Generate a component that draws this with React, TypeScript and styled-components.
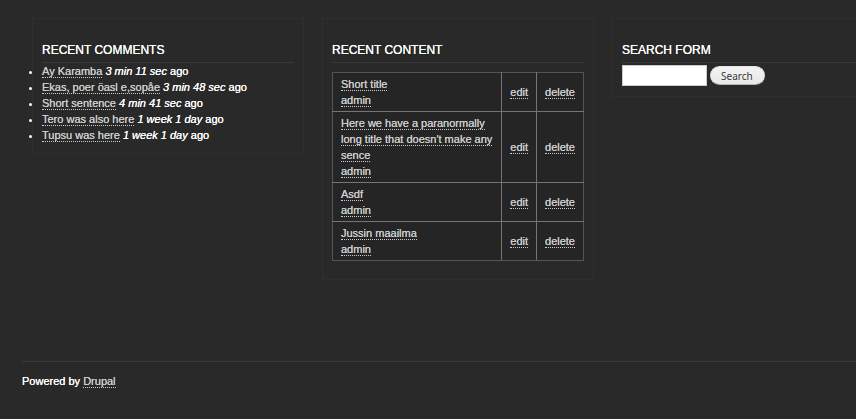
import React from "react";
import styled, { createGlobalStyle } from "styled-components";

const GlobalStyle = createGlobalStyle`
  *, *::before, *::after { box-sizing: border-box; }
  html { background: #292929; }
  body {
    margin: 0;
    background: #292929;
    color: #fff;
    font: 11px/16px "Liberation Sans", Arial, Helvetica, sans-serif;
    text-shadow: 0 0 0 currentColor;
  }
`;

const Page = styled.div`
  overflow-x: hidden;
  padding: 18px 0 24px 22px;
`;

const Columns = styled.main`
  display: grid;
  grid-template-columns: repeat(3, minmax(272px, 1fr));
  gap: 18px;
  align-items: start;
  padding: 0 10px;
`;

const Block = styled.section`
  border: 1px solid #2f2f2f;
  padding: 20px 9px 10px;
`;

const BlockTitle = styled.h2`
  margin: 0;
  padding: 3px 0 4px;
  border-bottom: 1px solid #393939;
  font-size: 12px;
  line-height: 16px;
  font-weight: 400;
  text-transform: uppercase;
`;

const CommentList = styled.ul`
  margin: 0;
  padding: 0;
  list-style: disc outside;
`;

const Link = styled.a`
  color: #ccc;
  text-decoration: none;
  border-bottom: 1px dotted #ccc;
`;

const ContentTable = styled.table`
  width: 100%;
  margin: 9px 0 8px;
  border-collapse: collapse;
  background: #252525;
`;

const Cell = styled.td<{ $fill?: boolean }>`
  width: ${(p) => (p.$fill ? "100%" : "auto")};
  padding: 3px 8px;
  border: 1px solid #757575;
  vertical-align: middle;

  &:first-child { border-left-color: #555; }
  &:last-child { border-right-color: #555; }
  tr:first-child > & { border-top-color: #555; }
  tr:last-child > & { border-bottom-color: #555; }
`;

const SearchRow = styled.form`
  display: flex;
  align-items: center;
  gap: 3px;
  padding-top: 2px;
`;

const SearchInput = styled.input`
  width: 85px;
  height: 21px;
  margin: 0;
  padding: 2px;
  border: 1px solid #ccc;
  background: #fff;
  color: #222;
  font: inherit;
`;

const SearchButton = styled.button`
  height: 19px;
  margin: 0;
  padding: 0 11px 0 10px;
  border: 1px solid #e4e4e4;
  border-bottom-color: #b4b4b4;
  border-radius: 10px;
  background: linear-gradient(#f3f3f3, #e8e8e8);
  color: #3a3a3a;
  font: 10px/16px "Noto Sans", "Open Sans", sans-serif;
  cursor: pointer;
`;

const Footer = styled.footer`
  margin-top: 81px;
  padding-top: 11px;
  border-top: 1px solid #3a3a3a;
`;

const comments = [
  { title: "Ay Karamba", age: "3 min 11 sec" },
  { title: "Ekas, poer öasl e,sopåe", age: "3 min 48 sec" },
  { title: "Short sentence", age: "4 min 41 sec" },
  { title: "Tero was also here", age: "1 week 1 day" },
  { title: "Tupsu was here", age: "1 week 1 day" },
];

const contents = [
  "Short title",
  "Here we have a paranormally long title that doesn't make any sence",
  "Asdf",
  "Jussin maailma",
];

export default function App() {
  return (
    <>
      <GlobalStyle />
      <Page>
        <Columns>
          <Block>
            <BlockTitle>Recent comments</BlockTitle>
            <CommentList>
              {comments.map((c) => (
                <li key={c.title}>
                  <Link href="#">{c.title}</Link> <em>{c.age}</em> ago
                </li>
              ))}
            </CommentList>
          </Block>
          <Block>
            <BlockTitle>Recent content</BlockTitle>
            <ContentTable>
              <tbody>
                {contents.map((title) => (
                  <tr key={title}>
                    <Cell $fill>
                      <Link href="#">{title}</Link>
                      <br />
                      <Link href="#">admin</Link>
                    </Cell>
                    <Cell>
                      <Link href="#">edit</Link>
                    </Cell>
                    <Cell>
                      <Link href="#">delete</Link>
                    </Cell>
                  </tr>
                ))}
              </tbody>
            </ContentTable>
          </Block>
          <Block>
            <BlockTitle>Search form</BlockTitle>
            <SearchRow onSubmit={(e) => e.preventDefault()}>
              <SearchInput type="text" aria-label="Search" />
              <SearchButton type="submit">Search</SearchButton>
            </SearchRow>
          </Block>
        </Columns>
        <Footer>
          Powered by <Link href="#">Drupal</Link>
        </Footer>
      </Page>
    </>
  );
}
